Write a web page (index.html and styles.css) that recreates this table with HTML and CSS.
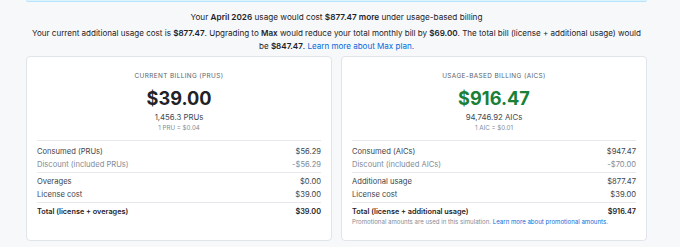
FILE: index.html
```html
<!DOCTYPE html>
<html lang="en">

<head>
    <meta charset="UTF-8">
    <meta name="viewport" content="width=device-width, initial-scale=1.0">
    <title>Billing simulation</title>
    <link rel="stylesheet" href="styles.css">
</head>

<body>
    <div class="page">
        <div class="banner"></div>

        <section class="summary">
            <p class="summary-lead">Your <b>April 2026</b> usage would cost <b>$877.47 more</b> under usage-based billing</p>
            <p class="summary-text">Your current additional usage cost is <b>$877.47</b>. Upgrading to <b>Max</b> would reduce your total monthly bill by <b>$69.00</b>. The total bill (license + additional usage) would be <b>$847.47</b>. <a href="#">Learn more about Max plan.</a></p>
        </section>

        <section class="compare">
            <div class="card">
                <div class="card-head">
                    <h2>Current billing (PRUs)</h2>
                    <div class="amount">$39.00</div>
                    <div class="units">1,456.3 PRUs</div>
                    <div class="rate">1 PRU = $0.04</div>
                </div>
                <ul class="rows">
                    <li><span>Consumed (PRUs)</span><span>$56.29</span></li>
                    <li class="muted"><span>Discount (included PRUs)</span><span>-$56.29</span></li>
                    <li class="sep"></li>
                    <li><span>Overages</span><span>$0.00</span></li>
                    <li><span>License cost</span><span>$39.00</span></li>
                    <li class="sep"></li>
                    <li class="total"><span>Total (license + overages)</span><span>$39.00</span></li>
                </ul>
            </div>

            <div class="card">
                <div class="card-head">
                    <h2>Usage-based billing (AICs)</h2>
                    <div class="amount green">$916.47</div>
                    <div class="units">94,746.92 AICs</div>
                    <div class="rate">1 AIC = $0.01</div>
                </div>
                <ul class="rows">
                    <li><span>Consumed (AICs)</span><span>$947.47</span></li>
                    <li class="muted"><span>Discount (included AICs)</span><span>-$70.00</span></li>
                    <li class="sep"></li>
                    <li><span>Additional usage</span><span>$877.47</span></li>
                    <li><span>License cost</span><span>$39.00</span></li>
                    <li class="sep"></li>
                    <li class="total"><span>Total (license + additional usage)</span><span>$916.47</span></li>
                </ul>
                <p class="note">Promotional amounts are used in this simulation. <a href="#">Learn more about promotional amounts.</a></p>
            </div>
        </section>

        <div class="next-box"></div>
    </div>
</body>

</html>
```

FILE: styles.css
```css
/* --- base --- */
:root {
    --bg-color: #f6f8fa;
    --card-bg: #ffffff;
    --text-color: #1f2328;
    --muted-color: #59636e;
    --faint-color: #818b98;
    --border-color: #e1e4e8;
    --line-color: #e6e8eb;
    --link-color: #0969da;
    --success-color: #1a7f37;
    --font-family: 'Inter', 'Noto Sans', sans-serif;
}

body {
    margin: 0;
    background-color: var(--bg-color);
    color: var(--text-color);
    font-family: var(--font-family);
}

.page {
    padding: 0 33px 0 26px;
}

a {
    color: var(--link-color);
    text-decoration: none;
}

/* --- info box above (only its bottom edge is visible) --- */
.banner {
    height: 1px;
    background: #ddf4ff;
    border-bottom: 1px solid #b6e3ff;
    border-radius: 0 0 4px 4px;
}

/* --- summary text --- */
.summary {
    text-align: center;
    padding-top: 9px;
}

.summary p {
    margin: 0;
}

.summary-lead {
    font-size: 8.2px;
    line-height: 12px;
}

.summary-lead b,
.summary-text b {
    font-weight: 600;
}

.summary-text {
    font-size: 8.05px;
    line-height: 13px;
    margin-top: 4px !important;
    padding: 0 2px;
}

/* --- billing cards --- */
.compare {
    display: grid;
    grid-template-columns: 1fr 1fr;
    gap: 9px;
    margin-top: 3px;
}

.card {
    background: var(--card-bg);
    border: 1px solid var(--border-color);
    border-radius: 4px;
    padding: 14px 10px 14px;
}

.card-head {
    text-align: center;
    padding-bottom: 8px;
    border-bottom: 1px solid var(--line-color);
    margin-bottom: 4px;
}

.card-head h2 {
    margin: 0;
    font-size: 6.4px;
    line-height: 10px;
    font-weight: 400;
    letter-spacing: 0.4px;
    text-transform: uppercase;
    color: var(--muted-color);
}

.amount {
    margin-top: 5px;
    font-size: 18.2px;
    line-height: 24px;
    font-weight: 700;
}

.amount.green {
    color: var(--success-color);
}

.units {
    margin-top: 2px;
    font-size: 7.8px;
    line-height: 11px;
    color: #424a53;
}

.rate {
    font-size: 6.2px;
    line-height: 9px;
    color: var(--faint-color);
}

.rows {
    list-style: none;
    margin: 0;
    padding: 0;
}

.rows li {
    display: flex;
    justify-content: space-between;
    font-size: 7.6px;
    line-height: 13px;
    color: #3d444d;
}

.rows li.muted {
    color: var(--faint-color);
}

.rows li.sep {
    height: 1px;
    background: var(--line-color);
    margin: 1px 0 2px;
}

.rows li.total {
    font-size: 7.3px;
    font-weight: 600;
    color: var(--text-color);
}

.note {
    margin: 0;
    font-size: 6.1px;
    line-height: 8px;
    color: var(--faint-color);
}

/* --- next section, cut off at the bottom --- */
.next-box {
    margin-top: 6px;
    height: 20px;
    background: var(--card-bg);
    border: 1px solid var(--border-color);
    border-radius: 4px 4px 0 0;
}
```
